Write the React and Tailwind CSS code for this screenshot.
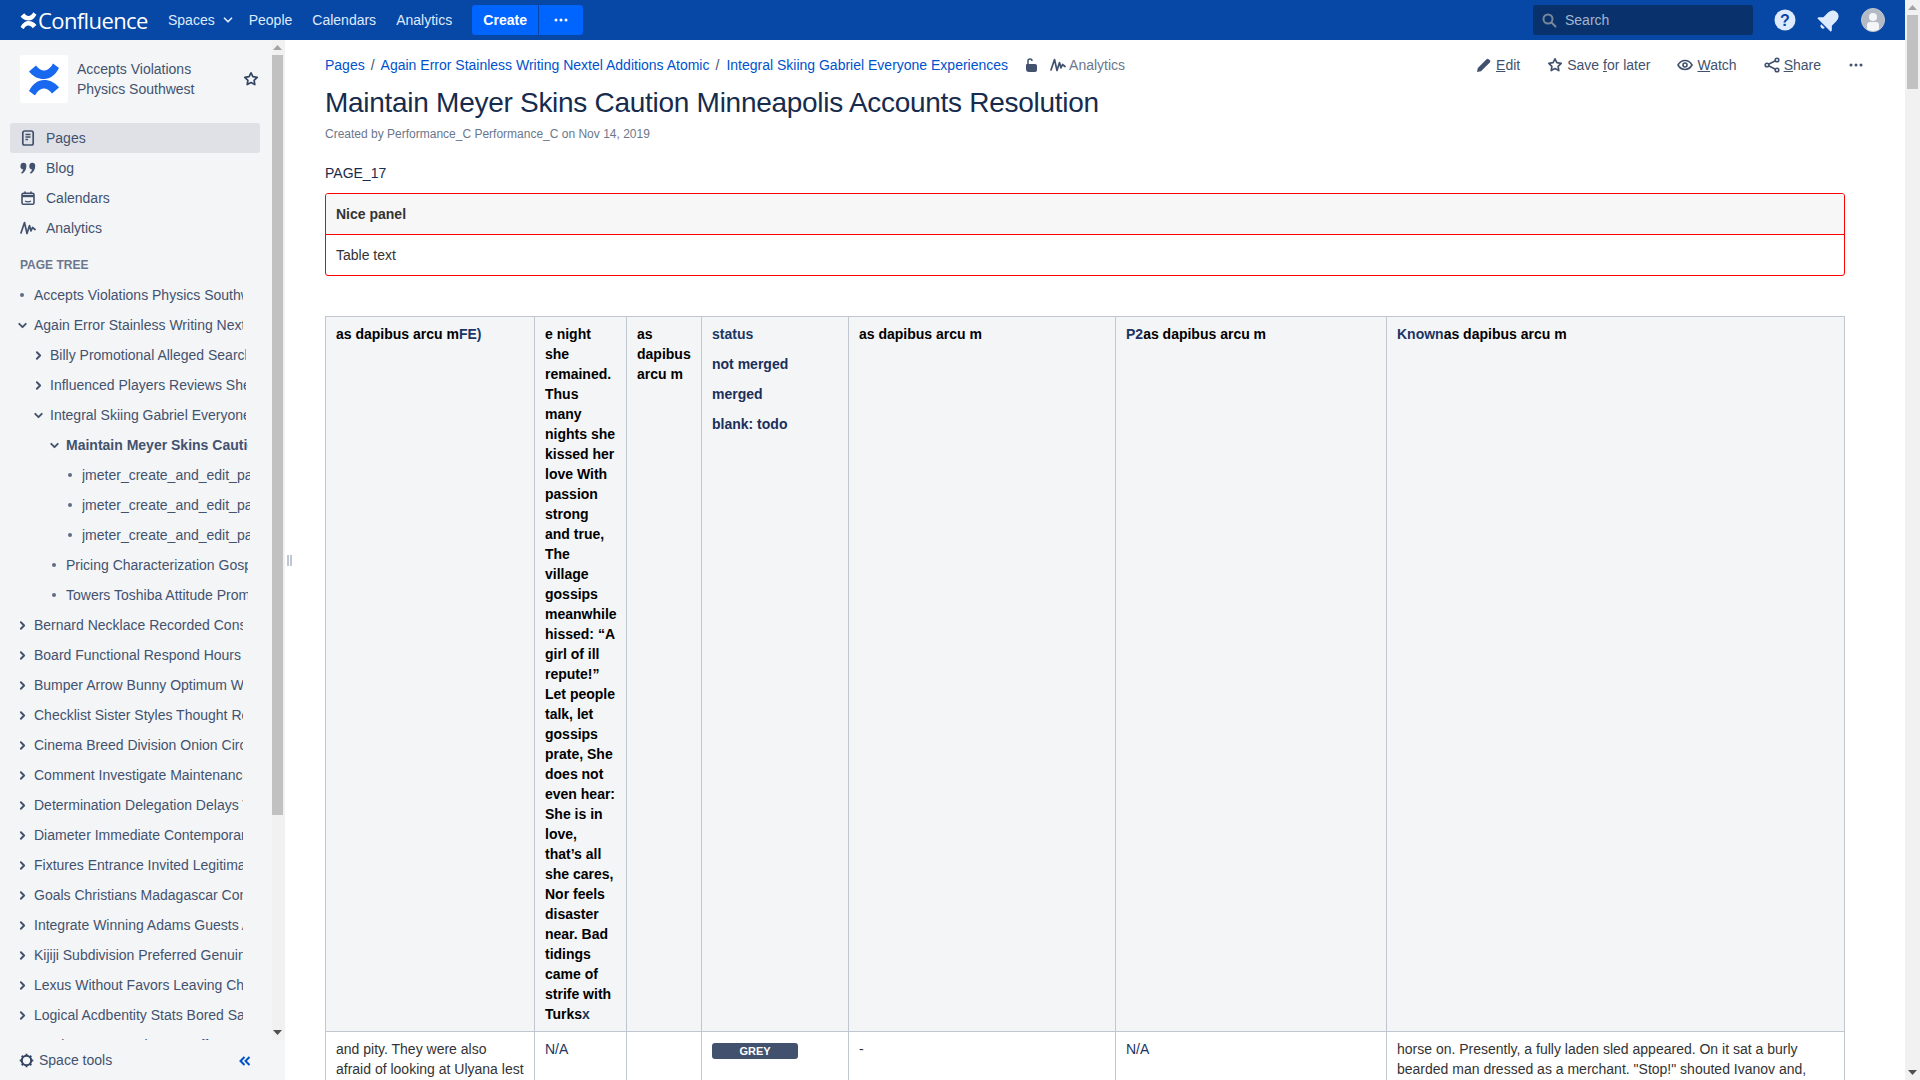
import { ChevronDown, ChevronRight } from 'lucide-react'

const font = "font-['Liberation_Sans',Arial,sans-serif]"

const band = 'M1 8.500l7-6c3 4 6 5.500 9 5 3-.5 6-3 8-7l6 4.500c-4 7.500-9 11-15 11C10 16 5 13.500 1 8.500z'

const LogoMark = ({ size = 18, className = '' }) => (
  <svg width={size} height={size} viewBox="0 0 32 32" className={className}>
    <path d={band} fill="currentColor" />
    <path d={band} fill="currentColor" transform="rotate(180 16 16.500)" />
  </svg>
)

const Star = ({ size = 16 }) => (
  <svg width={size} height={size} viewBox="0 0 16 16" fill="none" stroke="currentColor" strokeWidth="1.700" strokeLinejoin="round">
    <path d="M8 1.800l1.900 3.900 4.300.6-3.100 3 .7 4.300L8 11.600l-3.800 2 .7-4.300-3.100-3 4.300-.6z" />
  </svg>
)

const Analytics = ({ size = 16 }) => (
  <svg width={size} height={size} viewBox="0 0 16 16" fill="none" stroke="currentColor" strokeWidth="1.700" strokeLinecap="round" strokeLinejoin="round">
    <path d="M1 13L4.500 2.500 7 13.500 9.500 5.500 11 11l1.500-3.500L15 9.500" />
  </svg>
)

const PagesIcon = () => (
  <svg width="16" height="16" viewBox="0 0 16 16" fill="none">
    <rect x="2.800" y="1" width="10.400" height="14" rx="1.800" stroke="currentColor" strokeWidth="1.700" />
    <path d="M5.500 4.500h5M5.500 7h5M5.500 9.500h2.500" stroke="currentColor" strokeWidth="1.500" />
  </svg>
)

const QuoteIcon = () => (
  <svg width="16" height="15" viewBox="0.500 1.500 14.500 12" fill="currentColor">
    <path d="M1 5a2.600 2.600 0 1 1 5.300 0c0 3.500-1.700 6-4 7.300l-.8-1c1-.8 1.700-1.700 2-2.800A2.700 2.700 0 0 1 1 5z" />
    <path d="M9 5a2.600 2.600 0 1 1 5.300 0c0 3.500-1.700 6-4 7.300l-.8-1c1-.8 1.700-1.700 2-2.800A2.700 2.700 0 0 1 9 5z" />
  </svg>
)

const CalendarIcon = () => (
  <svg width="16" height="16" viewBox="0 0 16 16" fill="none" stroke="currentColor">
    <rect x="2" y="3.200" width="12" height="11" rx="1.500" strokeWidth="1.600" />
    <path d="M2 6h12" strokeWidth="2.400" />
    <path d="M5 1.500v2.500M11 1.500v2.500" strokeWidth="1.600" />
    <path d="M5 11c1.800 1 4.200 1 6 0" strokeWidth="1.200" />
  </svg>
)

const Gear = () => (
  <svg width="15" height="15" viewBox="0 0 16 16" fill="none" stroke="currentColor">
    <circle cx="8" cy="8" r="5" strokeWidth="2.200" />
    <path d="M8 .8v2.400M8 12.800v2.400M.8 8h2.400M12.800 8h2.400M2.900 2.900l1.700 1.700M11.400 11.400l1.700 1.700M2.900 13.100l1.700-1.700M11.400 4.600l1.700-1.700" strokeWidth="2" />
  </svg>
)

const Dots = ({ className = '' }) => (
  <svg width="16" height="16" viewBox="0 0 16 16" fill="currentColor" className={className}>
    <circle cx="3" cy="8" r="1.500" />
    <circle cx="8" cy="8" r="1.500" />
    <circle cx="13" cy="8" r="1.500" />
  </svg>
)

const TopBar = () => (
  <div className="h-10 bg-[#0747a6] flex items-center text-[#deebff] text-sm shrink-0">
    <div className="flex items-center ml-5 text-white w-[148px]">
      <LogoMark size={17} />
      <span className="ml-px text-[22px] leading-none font-['Open_Sans',sans-serif] tracking-[-0.6px]">Confluence</span>
    </div>
    <div className="flex items-center h-full">
      <span>Spaces</span>
      <ChevronDown size={14} strokeWidth={3} className="ml-[6px]" />
    </div>
    <span className="ml-[14px]">People</span>
    <span className="ml-[20px]">Calendars</span>
    <span className="ml-[20px]">Analytics</span>
    <div className="ml-5 flex h-[30px] gap-px">
      <div className="w-[66px] bg-[#0065ff] rounded-l-[3px] flex items-center justify-center text-white font-bold">Create</div>
      <div className="w-[44px] bg-[#0065ff] rounded-r-[3px] flex items-center justify-center text-white">
        <Dots />
      </div>
    </div>
    <div className="ml-auto w-[220px] h-[30px] bg-[#09326c] rounded-[3px] flex items-center pl-[8px]">
      <svg width="16" height="16" viewBox="0 0 16 16" fill="none" stroke="#7a869a" strokeWidth="2">
        <circle cx="7" cy="7" r="4.500" />
        <path d="M10.500 10.500L14.500 14.500" strokeLinecap="round" />
      </svg>
      <span className="ml-[8px] text-[#a5b5d0]">Search</span>
    </div>
    <svg width="22" height="22" viewBox="0 0 22 22" className="ml-[21px]">
      <circle cx="11" cy="11" r="10.500" fill="#deebff" />
      <text x="11" y="16.500" textAnchor="middle" fontSize="16" fontWeight="700" fontFamily="Liberation Sans" fill="#0747a6">?</text>
    </svg>
    <svg width="24" height="24" viewBox="0 0 24 24" fill="#deebff" className="ml-[21px]">
      <g transform="rotate(45 12 12)">
        <path d="M12 1C8 1 6 4 6 8v6l-3.500 3.500V19h19v-1.500L18 14V8c0-4-2-7-6-7z" />
        <path d="M9.500 20.500a2.500 2.500 0 0 0 5 0z" />
      </g>
    </svg>
    <div className="ml-[20px] mr-5 w-6 h-6 rounded-full bg-[#b3bac5] flex flex-col items-center overflow-hidden border border-[#c1c7d0]">
      <div className="w-2 h-2 rounded-full bg-[#f4f5f7] mt-[4px]" />
      <div className="w-[12px] h-[9px] rounded-t-[3px] rounded-b-[2px] bg-[#f4f5f7] mt-[1px]" />
    </div>
  </div>
)

const navItems = [
  { label: 'Pages', icon: <PagesIcon />, active: true },
  { label: 'Blog', icon: <QuoteIcon /> },
  { label: 'Calendars', icon: <CalendarIcon /> },
  { label: 'Analytics', icon: <Analytics /> },
]

const tree = [
  ['Accepts Violations Physics Southwest', 0, 'dot'],
  ['Again Error Stainless Writing Nextel Additions', 0, 'down'],
  ['Billy Promotional Alleged Search Engines', 1, 'right'],
  ['Influenced Players Reviews Sheet Metal', 1, 'right'],
  ['Integral Skiing Gabriel Everyone Experiences', 1, 'down'],
  ['Maintain Meyer Skins Caution Minneapolis', 2, 'down', true],
  ['jmeter_create_and_edit_page_one', 3, 'dot'],
  ['jmeter_create_and_edit_page_two', 3, 'dot'],
  ['jmeter_create_and_edit_page_three', 3, 'dot'],
  ['Pricing Characterization Gospel Rental', 2, 'dot'],
  ['Towers Toshiba Attitude Promised Cycling', 2, 'dot'],
  ['Bernard Necklace Recorded Consider Tips', 0, 'right'],
  ['Board Functional Respond Hours Annual', 0, 'right'],
  ['Bumper Arrow Bunny Optimum Wedding', 0, 'right'],
  ['Checklist Sister Styles Thought Remarks', 0, 'right'],
  ['Cinema Breed Division Onion Circuit', 0, 'right'],
  ['Comment Investigate Maintenance Series', 0, 'right'],
  ['Determination Delegation Delays Temple', 0, 'right'],
  ['Diameter Immediate Contemporary Gifts', 0, 'right'],
  ['Fixtures Entrance Invited Legitimate Club', 0, 'right'],
  ['Goals Christians Madagascar Connect', 0, 'right'],
  ['Integrate Winning Adams Guests Analysis', 0, 'right'],
  ['Kijiji Subdivision Preferred Genuine Tree', 0, 'right'],
  ['Lexus Without Favors Leaving Charts', 0, 'right'],
  ['Logical Acdbentity Stats Bored Saturday', 0, 'right'],
  ['Lumber Images Sheets Coffee Brand', 0, 'right'],
]

const levelPad = ['pl-[14px]', 'pl-[30px]', 'pl-[46px]', 'pl-[62px]']
const levelWidth = ['w-[209px]', 'w-[196px]', 'w-[181.500px]', 'w-[168px]']

const TreeRow = ({ label, level, kind, bold }) => (
  <div className={`h-[30px] flex items-center ${levelPad[level]}`}>
    <span className="w-4 h-4 flex items-center justify-center shrink-0">
      {kind === 'dot' && <span className="w-[4px] h-[4px] rounded-full bg-[#5e6c84]" />}
      {kind === 'down' && <ChevronDown size={13} strokeWidth={3.500} />}
      {kind === 'right' && <ChevronRight size={13} strokeWidth={3.500} />}
    </span>
    <span className={`ml-1 overflow-hidden whitespace-nowrap ${levelWidth[level]} ${bold ? 'font-bold' : ''}`}>{label}</span>
  </div>
)

const ScrollArrow = ({ down, color = '#a3a3a3' }) => (
  <svg width="9" height="5" viewBox="0 0 9 5" fill={color}>
    <path d={down ? 'M0 0h9L4.500 5z' : 'M0 5h9L4.500 0z'} />
  </svg>
)

const Sidebar = () => (
  <div className="w-[285px] h-full bg-[#f4f5f7] flex flex-col shrink-0 text-[#42526e] text-sm">
    <div className="relative flex-1 overflow-hidden min-h-0">
      <div className="pt-[15px] pl-5 pr-[24px] flex items-center text-sm">
        <div className="w-12 h-12 bg-white rounded-[3px] flex items-center justify-center shrink-0 text-[#1868f0]">
          <LogoMark size={32} />
        </div>
        <div className="ml-[9px] leading-5">
          <div>Accepts Violations</div>
          <div>Physics Southwest</div>
        </div>
        <div className="ml-auto mr-[2px] text-[#344563]">
          <Star size={16} />
        </div>
      </div>
      <div className="mt-5 pl-[10px] w-[260px]">
        {navItems.map((item) => (
          <div
            key={item.label}
            className={`h-[30px] flex items-center pl-[10px] rounded-[3px] ${item.active ? 'bg-[#dfe1e6]' : ''}`}
          >
            {item.icon}
            <span className="ml-[10px]">{item.label}</span>
          </div>
        ))}
      </div>
      <div className="mt-[12px] mb-[5px] pl-5 h-5 flex items-center text-xs font-bold text-[#6b778c]">PAGE TREE</div>
      {tree.map(([label, level, kind, bold]) => (
        <TreeRow key={label} label={label} level={level} kind={kind} bold={bold} />
      ))}
      <div className="absolute right-0 top-0 bottom-0 w-[13px] bg-[#f1f1f1] flex flex-col">
        <div className="h-[15px] flex items-center justify-center pr-[2px]"><ScrollArrow /></div>
        <div className="h-[760px] w-[11px] bg-[#c1c1c1]" />
        <div className="mt-auto h-[15px] flex items-center justify-center pr-[2px]"><ScrollArrow down color="#505050" /></div>
      </div>
    </div>
    <div className="h-10 shrink-0 flex items-center pl-[19px] pr-[34px] text-[#344563]">
      <Gear />
      <span className="ml-[5px] text-[#42526e]">Space tools</span>
      <svg width="12" height="10" viewBox="0 0 12 10" fill="none" stroke="#0052cc" strokeWidth="2" className="ml-auto mt-[2px]">
        <path d="M5.500 1L1.500 5l4 4M10.500 1l-4 4 4 4" />
      </svg>
    </div>
  </div>
)

const Action = ({ icon, pre = '', mark, post }) => (
  <div className="flex items-center">
    <span className="w-4 h-4 flex items-center justify-center">{icon}</span>
    <span className="ml-1">
      {pre}
      <span className="underline">{mark}</span>
      {post}
    </span>
  </div>
)

const Crumbs = () => (
  <div className="flex items-center text-sm text-[#0052cc]">
    <span>Pages</span>
    <span className="mx-[6px] text-[#42526e]">/</span>
    <span>Again Error Stainless Writing Nextel Additions Atomic</span>
    <span className="ml-[6px] mr-[7px] text-[#42526e]">/</span>
    <span>Integral Skiing Gabriel Everyone Experiences</span>
    <svg width="14" height="16" viewBox="0 0 14 16" fill="#42526e" className="ml-[16px]">
      <path d="M2 8a1 1 0 0 1 1-1h8a2 2 0 0 1 2 2v4a2 2 0 0 1-2 2H5a3 3 0 0 1-3-3z" />
      <path d="M4 7V4a2 2 0 0 1 4 0" fill="none" stroke="#42526e" strokeWidth="1.500" />
    </svg>
    <span className="ml-[12px] text-[#42526e]"><Analytics size={16} /></span>
    <span className="ml-[3px] text-[#6b778c]">Analytics</span>
  </div>
)

const cell = 'border border-[#c1c7d0] align-top px-[10px] py-[7px]'
const head = `${cell} bg-[#f4f5f7] font-bold text-black`

const poem = 'e night she remained. Thus many nights she kissed her love With passion strong and true, The village gossips meanwhile hissed: “A girl of ill repute!” Let people talk, let gossips prate, She does not even hear: She is in love, that’s all she cares, Nor feels disaster near. Bad tidings came of strife with Turks'

const ContentTable = () => (
  <table className="mt-[40px] w-[1519px] table-fixed border-collapse text-sm leading-5">
    <colgroup>
      <col className="w-[209px]" />
      <col className="w-[92px]" />
      <col className="w-[75px]" />
      <col className="w-[147px]" />
      <col className="w-[267px]" />
      <col className="w-[271px]" />
      <col className="w-[458px]" />
    </colgroup>
    <tbody>
      <tr className="h-[715px]">
        <td className={head}>as dapibus arcu m<span className="text-[#1b3564]">FE)</span></td>
        <td className={head}>{poem}<span className="text-[#1b3564]">x</span></td>
        <td className={head}>as dapibus arcu m</td>
        <td className={head}>
          <p className="text-[#1b3564]">status</p>
          <p className="mt-[10px] text-[#1a2f5a]">not merged</p>
          <p className="mt-[10px] text-[#1a2f5a]">merged</p>
          <p className="mt-[10px] text-[#1a2f5a]">blank: todo</p>
        </td>
        <td className={head}>as dapibus arcu m</td>
        <td className={head}><span className="text-[#1b3564]">P2</span>as dapibus arcu m</td>
        <td className={head}><span className="text-[#1b3564]">Known</span>as dapibus arcu m</td>
      </tr>
      <tr>
        <td className={`${cell} text-[#333333]`}>and pity. They were also afraid of looking at Ulyana lest they should be seen</td>
        <td className={`${cell} text-[#1b3564]`}>N/A</td>
        <td className={cell}></td>
        <td className={cell}>
          <div className="h-4 mt-[4px] w-[86px] rounded-[3px] bg-[#42526e] text-white text-[11px] leading-4 font-bold text-center">GREY</div>
        </td>
        <td className={`${cell} text-[#333333]`}>-</td>
        <td className={`${cell} text-[#1b3564]`}>N/A</td>
        <td className={`${cell} text-[#333333]`}>horse on. Presently, a fully laden sled appeared. On it sat a burly bearded man dressed as a merchant. "Stop!" shouted Ivanov and, drawing his sword, ran out to the road</td>
      </tr>
    </tbody>
  </table>
)

const Main = () => (
  <div className="relative flex-1 min-w-0 h-full overflow-hidden">
    <div className="absolute left-[2px] top-[515px] flex gap-px">
      <div className="w-[2px] h-[11px] bg-[#c1c7d0]" />
      <div className="w-[2px] h-[11px] bg-[#c1c7d0]" />
    </div>
    <div className="pl-10 pr-[41px] pt-[10px] h-[40px] flex items-center justify-between">
      <Crumbs />
      <div className="flex items-center gap-[27px] text-sm text-[#42526e]">
        <Action
          icon={
            <svg width="16" height="16" viewBox="0 0 16 16" fill="currentColor">
              <path d="M1 15l.8-4L10.600 2.200a1.500 1.500 0 0 1 2.100 0l1.100 1.100a1.500 1.500 0 0 1 0 2.100L5 14.200z" />
            </svg>
          }
          mark="E"
          post="dit"
        />
        <Action icon={<Star size={16} />} pre="Save " mark="f" post="or later" />
        <Action
          icon={
            <svg width="16" height="16" viewBox="0 0 16 16" fill="none" stroke="currentColor" strokeWidth="1.600">
              <path d="M1 8c1.700-3 4-4.500 7-4.500S13.300 5 15 8c-1.700 3-4 4.500-7 4.500S2.700 11 1 8z" />
              <circle cx="8" cy="8" r="2" />
            </svg>
          }
          mark="W"
          post="atch"
        />
        <Action
          icon={
            <svg width="16" height="16" viewBox="0 0 16 16" fill="none" stroke="currentColor" strokeWidth="1.600">
              <circle cx="3" cy="8" r="1.800" />
              <circle cx="13" cy="3" r="1.800" />
              <circle cx="13" cy="13" r="1.800" />
              <path d="M4.600 7.200l6.800-3.400M4.600 8.800l6.800 3.400" />
            </svg>
          }
          mark="S"
          post="hare"
        />
        <Dots />
      </div>
    </div>
    <div className="pl-10 pr-[60px]">
      <h1 className="mt-[5px] text-[28px] leading-[36px] tracking-[-0.01em] font-normal text-[#172b4d]">
        Maintain Meyer Skins Caution Minneapolis Accounts Resolution
      </h1>
      <div className="mt-[5px] text-xs leading-4 text-[#6b778c]">
        Created by Performance_C Performance_C on Nov 14, 2019
      </div>
      <p className="mt-[21px] text-sm leading-5 text-[#172b4d]">PAGE_17</p>
      <div className="mt-[10px] w-[1520px] h-[83px] border border-[#ff0000] rounded-[3px] text-sm text-[#333333] overflow-hidden">
        <div className="h-[41px] bg-[#f7f7f7] border-b border-[#ff0000] flex items-center pl-[10px] font-bold">Nice panel</div>
        <div className="h-[40px] flex items-center pl-[10px]">Table text</div>
      </div>
      <ContentTable />
    </div>
  </div>
)

const PageScrollbar = () => (
  <div className="w-[15px] h-full bg-[#f1f1f1] flex flex-col items-center shrink-0">
    <div className="h-[15px] flex items-center justify-center"><ScrollArrow /></div>
    <div className="h-[74px] w-[11px] bg-[#c1c1c1]" />
    <div className="mt-auto h-[15px] flex items-center justify-center"><ScrollArrow down color="#505050" /></div>
  </div>
)

export default function App() {
  return (
    <div className={`h-screen w-full overflow-hidden flex bg-white ${font}`}>
      <div className="flex-1 min-w-0 flex flex-col h-full">
        <TopBar />
        <div className="flex-1 min-h-0 flex">
          <Sidebar />
          <Main />
        </div>
      </div>
      <PageScrollbar />
    </div>
  )
}
